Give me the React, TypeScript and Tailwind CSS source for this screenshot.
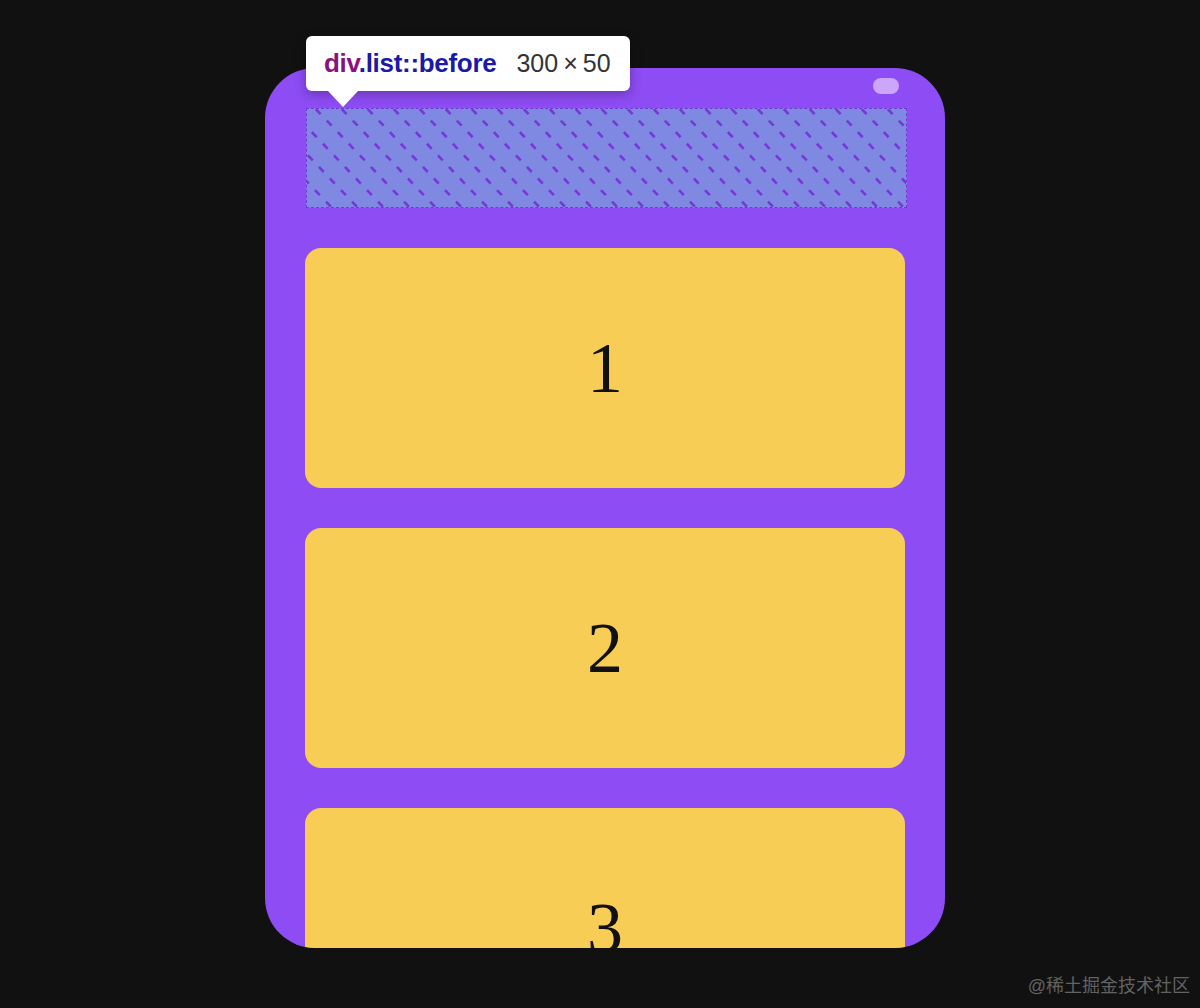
import React from "react";

function Hatch() {
  const lines = [];
  const slope = 1.05;
  const h = 100;
  const span = h / slope;
  for (let x = -span - 26; x < 626; x += 26) {
    lines.push(
      <line
        key={x}
        x1={x}
        y1={0}
        x2={x + span}
        y2={h}
        stroke="#7838d8"
        strokeWidth={2.6}
        strokeDasharray="7 9"
      />
    );
  }
  return (
    <svg className="absolute inset-0" width="600" height="100" viewBox="0 0 600 100">
      {lines}
    </svg>
  );
}

export default function App() {
  return (
    <div className="relative min-h-[1008px] w-full bg-[#111111] pt-[68px] pl-[265px]">
      <div className="relative w-[680px] h-[880px] rounded-[50px] bg-[#8e4cf4] overflow-hidden">
        <div className="flex flex-col gap-[40px] p-[40px]">
          <div className="relative ml-[1px] w-[601px] h-[100px] bg-[#7f89e1] border-[1.5px] border-dashed border-[#7b35d6] overflow-hidden">
            <Hatch />
          </div>
          {[1, 2, 3].map((n) => (
            <div
              key={n}
              className="flex h-[240px] w-[600px] shrink-0 items-center justify-center rounded-[16px] bg-[#f7cd55] text-[72px] leading-none text-[#111111]"
              style={{ fontFamily: '"Liberation Serif", "Times New Roman", serif' }}
            >
              {n}
            </div>
          ))}
        </div>
        <div className="absolute left-[608px] top-[10px] h-[16px] w-[26px] rounded-full bg-[#cba6fb]" />
      </div>

      <div
        className="absolute left-[306px] top-[36px] flex h-[55px] w-[324px] items-center rounded-[6px] bg-white pl-[18px] shadow-[0_3px_12px_rgba(0,0,0,0.3)]"
        style={{ fontFamily: '"Liberation Sans", Arial, sans-serif' }}
      >
        <span className="text-[26px] font-bold tracking-[-0.3px]">
          <span className="text-[#881280]">div</span>
          <span className="text-[#1a1aa6]">.list::before</span>
        </span>
        <span className="ml-[20px] text-[25px] text-[#333333]">300{"\u2009×\u2009"}50</span>
        <div className="absolute left-[22px] top-[55px] h-0 w-0 border-l-[15px] border-r-[15px] border-t-[16px] border-l-transparent border-r-transparent border-t-white" />
      </div>

      <div
        className="absolute right-[10px] bottom-[8px] text-[18px] text-[#626262]"
        style={{ fontFamily: '"Liberation Sans", "Noto Sans CJK SC", sans-serif' }}
      >
        @稀土掘金技术社区
      </div>
    </div>
  );
}
